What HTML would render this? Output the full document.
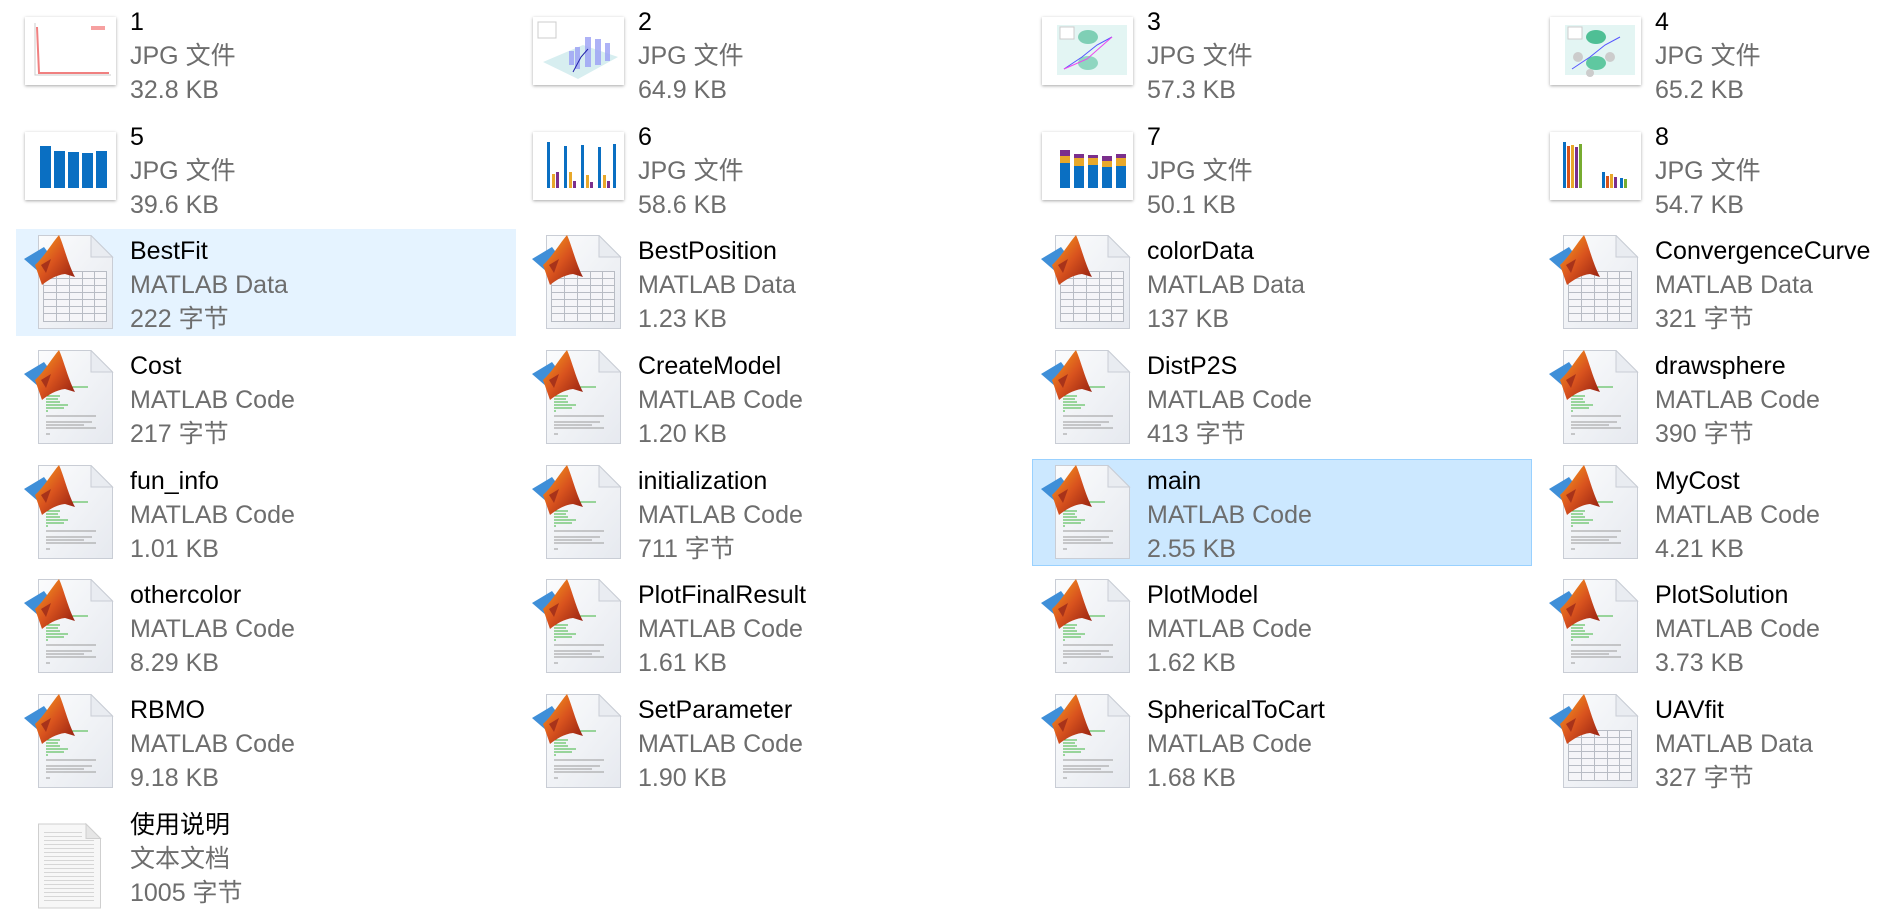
<!DOCTYPE html>
<html><head><meta charset="utf-8">
<style>
html,body{margin:0;padding:0;background:#fff;width:1893px;height:916px;overflow:hidden}
body{position:relative;font-family:"Liberation Sans","Noto Sans CJK SC",sans-serif}
.it{position:absolute;width:500px;height:107px;box-sizing:border-box}
.sel1{background:#e5f3ff}
.sel2{background:#cce8ff;border:1px solid #99d1ff}
.ic{position:absolute;left:8px;top:6px}
.th{position:absolute;left:9px;top:17px;width:91px;height:68px;background:#fff;box-shadow:0 1px 3px rgba(0,0,0,.35)}
.tx{position:absolute;left:114px;top:5px;font-size:25px;line-height:34px;color:#6d6d6d;white-space:nowrap}
.tx div:first-child{color:#000}
</style></head><body>
<svg width="0" height="0" style="position:absolute">
<defs>
<linearGradient id="pg" x1="0" y1="0" x2="1" y2="1"><stop offset="0" stop-color="#fbfcfd"/><stop offset="1" stop-color="#e6e9ef"/></linearGradient>
<linearGradient id="og" x1="0" y1="0" x2="1" y2="1"><stop offset="0" stop-color="#f7a21b"/><stop offset=".5" stop-color="#d9531e"/><stop offset="1" stop-color="#8c1a10"/></linearGradient>
<symbol id="page" viewBox="0 0 90 95">
<path d="M14.5 0.5H67L88.5 22V93.5H14.5Z" fill="url(#pg)" stroke="#c9cdd5"/>
<path d="M67 0.5V22H88.5Z" fill="#e9ecf1" stroke="#c9cdd5"/>
</symbol>
<symbol id="logo" viewBox="0 0 90 95">
<path d="M0 24L20 12L32 28L15 37Z" fill="#3f8fd8"/>
<path d="M11 30C20 22 28 8 35 0C40 11 44 29 51 42L41 39C32 40 24 45 18 50Z" fill="url(#og)"/>
<path d="M17 30L27 24L22 38Z" fill="#a8331a"/>
</symbol>
<symbol id="mat" viewBox="0 0 90 95">
<use href="#page"/>
<g stroke="#b8bcc4" stroke-width="1" fill="none">
<rect x="19.5" y="36.5" width="63" height="50" fill="#f5f5f8"/>
<path d="M19.5 43.5H82.5M19.5 50.5H82.5M19.5 57.5H82.5M19.5 64.5H82.5M19.5 71.5H82.5M19.5 78.5H82.5M32.5 36.5V86.5M45.5 36.5V86.5M58.5 36.5V86.5M70.5 36.5V86.5"/>
</g>
<use href="#logo"/>
</symbol>
<symbol id="code" viewBox="0 0 90 95">
<use href="#page"/>
<g stroke="#3fb53f" stroke-width="1">
<path d="M22 37H64M22 40H28M22 43H26M22 46H36M22 49H34M22 52H36M22 55H44M22 58H40M22 61H24"/>
</g>
<g stroke="#9a9a9a" stroke-width="1">
<path d="M22 66H72M22 72H68M22 75H60M22 78H72M22 84H26"/>
</g>
<use href="#logo"/>
</symbol>
<symbol id="txt" viewBox="0 0 90 95">
<path d="M14.5 12.5H62L76.5 27V96.5H14.5Z" fill="#f7f7f7" stroke="#cfcfcf"/>
<path d="M62 12.5V27H76.5Z" fill="#e6e6e6" stroke="#cfcfcf"/>
<path d="M20 21H58M20 25H58M20 29H70M20 33H70M20 37H70M20 41H70M20 45H70M20 49H70M20 53H70M20 57H70M20 61H70M20 65H70M20 69H70M20 73H70M20 77H70M20 81H70M20 85H70M20 89H70" stroke="#d6d6d6"/>
</symbol>
</defs></svg>

<!-- row 0 -->
<div class="it" style="left:16px;top:0px"><div class="th"><svg width="91" height="68"><path d="M10 6V58H86" stroke="#ccc" fill="none"/><path d="M12 10L14 56H84" stroke="#f08080" stroke-width="2" fill="none"/><rect x="66" y="9" width="14" height="4" fill="#f6a0a0"/></svg></div><div class="tx"><div>1</div><div>JPG 文件</div><div>32.8 KB</div></div></div>
<div class="it" style="left:524px;top:0px"><div class="th"><svg width="91" height="68"><path d="M10 45L45 62L85 40L50 28Z" fill="#d7eef0"/><g fill="#9aa0f5" opacity=".8"><rect x="42" y="30" width="5" height="22"/><rect x="52" y="20" width="6" height="30"/><rect x="62" y="22" width="6" height="26"/><rect x="72" y="26" width="5" height="18"/><rect x="36" y="34" width="5" height="14"/></g><path d="M40 55L48 40L55 32" stroke="#22a" fill="none"/><rect x="5" y="5" width="18" height="16" fill="#fff" stroke="#ccc"/></svg></div><div class="tx"><div>2</div><div>JPG 文件</div><div>64.9 KB</div></div></div>
<div class="it" style="left:1033px;top:0px"><div class="th"><svg width="91" height="68"><rect x="15" y="8" width="70" height="50" fill="#e3f5f3"/><ellipse cx="46" cy="20" rx="10" ry="7" fill="#7fcfb5"/><ellipse cx="46" cy="46" rx="10" ry="7" fill="#8fd6c0"/><path d="M22 52L40 40L55 28L70 20" stroke="#55f" fill="none"/><path d="M22 52L45 42L70 20" stroke="#e4e" fill="none"/><rect x="18" y="10" width="14" height="12" fill="#fff" stroke="#ccc"/></svg></div><div class="tx"><div>3</div><div>JPG 文件</div><div>57.3 KB</div></div></div>
<div class="it" style="left:1541px;top:0px"><div class="th"><svg width="91" height="68"><rect x="15" y="8" width="70" height="50" fill="#e3f5f3"/><ellipse cx="46" cy="20" rx="10" ry="7" fill="#4fbf95"/><ellipse cx="46" cy="46" rx="10" ry="7" fill="#5fc8a0"/><circle cx="28" cy="40" r="5" fill="#ccc"/><circle cx="60" cy="40" r="5" fill="#ccc"/><circle cx="40" cy="56" r="4" fill="#ccc"/><path d="M22 52L40 40L55 28L70 20" stroke="#55f" fill="none"/><rect x="18" y="10" width="14" height="12" fill="#fff" stroke="#ccc"/></svg></div><div class="tx"><div>4</div><div>JPG 文件</div><div>65.2 KB</div></div></div>

<!-- row 1 -->
<div class="it" style="left:16px;top:115px"><div class="th"><svg width="91" height="68"><g fill="#0a6fc2"><rect x="15" y="14" width="11" height="42"/><rect x="29" y="19" width="11" height="37"/><rect x="43" y="20" width="11" height="36"/><rect x="57" y="21" width="11" height="35"/><rect x="71" y="19" width="11" height="37"/></g></svg></div><div class="tx"><div>5</div><div>JPG 文件</div><div>39.6 KB</div></div></div>
<div class="it" style="left:524px;top:115px"><div class="th"><svg width="91" height="68"><g fill="#0a6fc2"><rect x="14" y="10" width="3" height="46"/><rect x="31" y="14" width="3" height="42"/><rect x="48" y="13" width="3" height="43"/><rect x="65" y="15" width="3" height="41"/><rect x="80" y="12" width="3" height="44"/></g><g fill="#e8a82a"><rect x="19" y="42" width="3" height="14"/><rect x="36" y="40" width="3" height="16"/><rect x="53" y="43" width="3" height="13"/><rect x="70" y="43" width="3" height="13"/></g><g fill="#7b2f8c"><rect x="23" y="40" width="3" height="16"/><rect x="40" y="49" width="3" height="7"/><rect x="57" y="50" width="3" height="6"/><rect x="74" y="49" width="3" height="7"/></g></svg></div><div class="tx"><div>6</div><div>JPG 文件</div><div>58.6 KB</div></div></div>
<div class="it" style="left:1033px;top:115px"><div class="th"><svg width="91" height="68"><g><rect x="18" y="18" width="10" height="38" fill="#7b2f8c"/><rect x="18" y="24" width="10" height="32" fill="#e8a82a"/><rect x="18" y="31" width="10" height="25" fill="#0a6fc2"/><rect x="32" y="22" width="10" height="34" fill="#7b2f8c"/><rect x="32" y="26" width="10" height="30" fill="#e8a82a"/><rect x="32" y="34" width="10" height="22" fill="#0a6fc2"/><rect x="46" y="23" width="10" height="33" fill="#7b2f8c"/><rect x="46" y="26" width="10" height="30" fill="#e8a82a"/><rect x="46" y="33" width="10" height="23" fill="#0a6fc2"/><rect x="60" y="24" width="10" height="32" fill="#7b2f8c"/><rect x="60" y="29" width="10" height="27" fill="#e8a82a"/><rect x="60" y="35" width="10" height="21" fill="#0a6fc2"/><rect x="74" y="22" width="10" height="34" fill="#7b2f8c"/><rect x="74" y="26" width="10" height="30" fill="#e8a82a"/><rect x="74" y="34" width="10" height="22" fill="#0a6fc2"/></g></svg></div><div class="tx"><div>7</div><div>JPG 文件</div><div>50.1 KB</div></div></div>
<div class="it" style="left:1541px;top:115px"><div class="th"><svg width="91" height="68"><rect x="13" y="10" width="3" height="46" fill="#0a6fc2"/><rect x="17" y="14" width="3" height="42" fill="#d95319"/><rect x="21" y="13" width="3" height="43" fill="#e8a82a"/><rect x="25" y="15" width="3" height="41" fill="#7b2f8c"/><rect x="29" y="12" width="3" height="44" fill="#77ac30"/><rect x="52" y="40" width="3" height="16" fill="#0a6fc2"/><rect x="56" y="44" width="3" height="12" fill="#d95319"/><rect x="60" y="42" width="3" height="14" fill="#e8a82a"/><rect x="64" y="45" width="3" height="11" fill="#7b2f8c"/><rect x="70" y="46" width="3" height="10" fill="#0a6fc2"/><rect x="74" y="47" width="3" height="9" fill="#77ac30"/></svg></div><div class="tx"><div>8</div><div>JPG 文件</div><div>54.7 KB</div></div></div>

<!-- row 2 -->
<div class="it sel1" style="left:16px;top:229px"><svg class="ic" width="90" height="95"><use href="#mat"/></svg><div class="tx"><div>BestFit</div><div>MATLAB Data</div><div>222 字节</div></div></div>
<div class="it" style="left:524px;top:229px"><svg class="ic" width="90" height="95"><use href="#mat"/></svg><div class="tx"><div>BestPosition</div><div>MATLAB Data</div><div>1.23 KB</div></div></div>
<div class="it" style="left:1033px;top:229px"><svg class="ic" width="90" height="95"><use href="#mat"/></svg><div class="tx"><div>colorData</div><div>MATLAB Data</div><div>137 KB</div></div></div>
<div class="it" style="left:1541px;top:229px"><svg class="ic" width="90" height="95"><use href="#mat"/></svg><div class="tx"><div>ConvergenceCurve</div><div>MATLAB Data</div><div>321 字节</div></div></div>

<!-- row 3 -->
<div class="it" style="left:16px;top:344px"><svg class="ic" width="90" height="95"><use href="#code"/></svg><div class="tx"><div>Cost</div><div>MATLAB Code</div><div>217 字节</div></div></div>
<div class="it" style="left:524px;top:344px"><svg class="ic" width="90" height="95"><use href="#code"/></svg><div class="tx"><div>CreateModel</div><div>MATLAB Code</div><div>1.20 KB</div></div></div>
<div class="it" style="left:1033px;top:344px"><svg class="ic" width="90" height="95"><use href="#code"/></svg><div class="tx"><div>DistP2S</div><div>MATLAB Code</div><div>413 字节</div></div></div>
<div class="it" style="left:1541px;top:344px"><svg class="ic" width="90" height="95"><use href="#code"/></svg><div class="tx"><div>drawsphere</div><div>MATLAB Code</div><div>390 字节</div></div></div>

<!-- row 4 -->
<div class="it" style="left:16px;top:459px"><svg class="ic" width="90" height="95"><use href="#code"/></svg><div class="tx"><div>fun_info</div><div>MATLAB Code</div><div>1.01 KB</div></div></div>
<div class="it" style="left:524px;top:459px"><svg class="ic" width="90" height="95"><use href="#code"/></svg><div class="tx"><div>initialization</div><div>MATLAB Code</div><div>711 字节</div></div></div>
<div class="it sel2" style="left:1032px;top:459px;height:107px"><svg class="ic" width="90" height="95" style="left:8px;top:5px"><use href="#code"/></svg><div class="tx" style="top:4px"><div>main</div><div>MATLAB Code</div><div>2.55 KB</div></div></div>
<div class="it" style="left:1541px;top:459px"><svg class="ic" width="90" height="95"><use href="#code"/></svg><div class="tx"><div>MyCost</div><div>MATLAB Code</div><div>4.21 KB</div></div></div>

<!-- row 5 -->
<div class="it" style="left:16px;top:573px"><svg class="ic" width="90" height="95"><use href="#code"/></svg><div class="tx"><div>othercolor</div><div>MATLAB Code</div><div>8.29 KB</div></div></div>
<div class="it" style="left:524px;top:573px"><svg class="ic" width="90" height="95"><use href="#code"/></svg><div class="tx"><div>PlotFinalResult</div><div>MATLAB Code</div><div>1.61 KB</div></div></div>
<div class="it" style="left:1033px;top:573px"><svg class="ic" width="90" height="95"><use href="#code"/></svg><div class="tx"><div>PlotModel</div><div>MATLAB Code</div><div>1.62 KB</div></div></div>
<div class="it" style="left:1541px;top:573px"><svg class="ic" width="90" height="95"><use href="#code"/></svg><div class="tx"><div>PlotSolution</div><div>MATLAB Code</div><div>3.73 KB</div></div></div>

<!-- row 6 -->
<div class="it" style="left:16px;top:688px"><svg class="ic" width="90" height="95"><use href="#code"/></svg><div class="tx"><div>RBMO</div><div>MATLAB Code</div><div>9.18 KB</div></div></div>
<div class="it" style="left:524px;top:688px"><svg class="ic" width="90" height="95"><use href="#code"/></svg><div class="tx"><div>SetParameter</div><div>MATLAB Code</div><div>1.90 KB</div></div></div>
<div class="it" style="left:1033px;top:688px"><svg class="ic" width="90" height="95"><use href="#code"/></svg><div class="tx"><div>SphericalToCart</div><div>MATLAB Code</div><div>1.68 KB</div></div></div>
<div class="it" style="left:1541px;top:688px"><svg class="ic" width="90" height="95"><use href="#mat"/></svg><div class="tx"><div>UAVfit</div><div>MATLAB Data</div><div>327 字节</div></div></div>

<!-- row 7 -->
<div class="it" style="left:16px;top:803px"><svg class="ic" width="90" height="100"><use href="#txt"/></svg><div class="tx"><div>使用说明</div><div>文本文档</div><div>1005 字节</div></div></div>
</body></html>
